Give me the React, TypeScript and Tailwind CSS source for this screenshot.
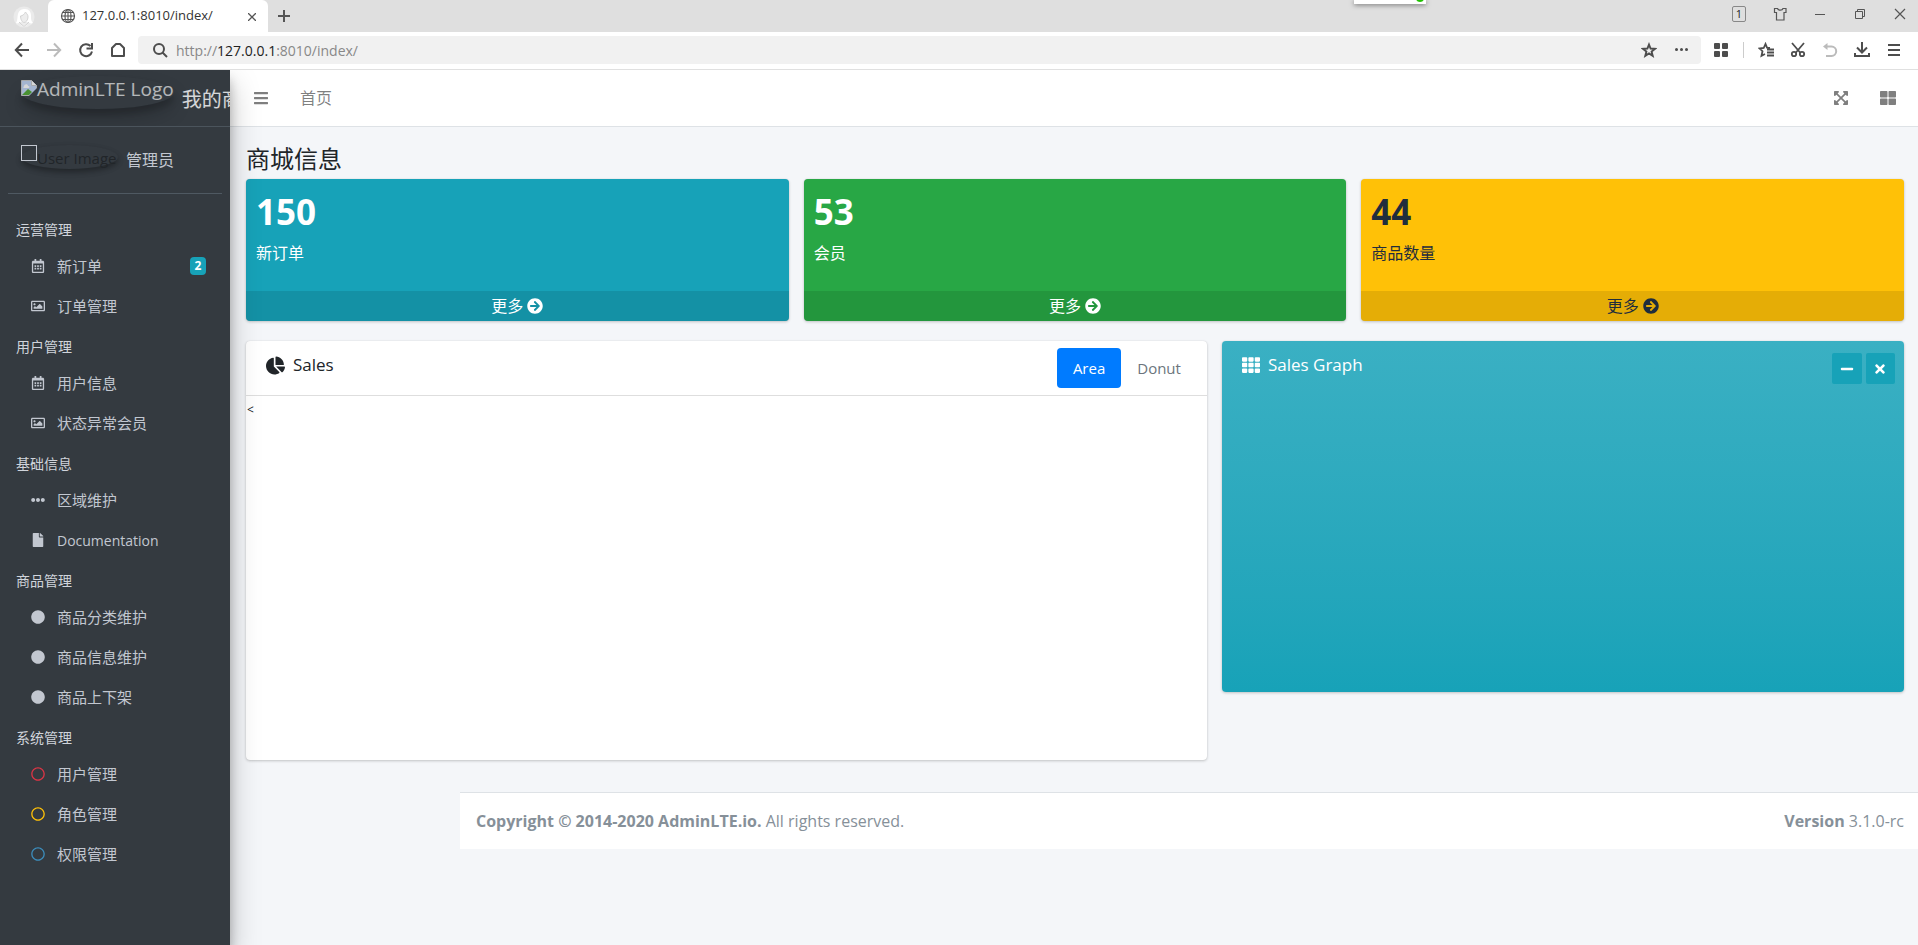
import { type ReactNode } from 'react'
import { clsx } from 'clsx'
import {
  FaArrowCircleRight,
  FaBars,
  FaChartPie,
  FaCircle,
  FaEllipsisH,
  FaExpandArrowsAlt,
  FaFile,
  FaMinus,
  FaRegCalendarAlt,
  FaRegCircle,
  FaRegImage,
  FaTh,
  FaThLarge,
  FaTimes,
} from 'react-icons/fa'

type NavItem = { label: string; icon: ReactNode; badge?: string; latin?: boolean }

const navGroups: { title: string; items: NavItem[] }[] = [
  {
    title: '运营管理',
    items: [
      { label: '新订单', icon: <FaRegCalendarAlt />, badge: '2' },
      { label: '订单管理', icon: <FaRegImage /> },
    ],
  },
  {
    title: '用户管理',
    items: [
      { label: '用户信息', icon: <FaRegCalendarAlt /> },
      { label: '状态异常会员', icon: <FaRegImage /> },
    ],
  },
  {
    title: '基础信息',
    items: [
      { label: '区域维护', icon: <FaEllipsisH /> },
      { label: 'Documentation', icon: <FaFile />, latin: true },
    ],
  },
  {
    title: '商品管理',
    items: [
      { label: '商品分类维护', icon: <FaCircle /> },
      { label: '商品信息维护', icon: <FaCircle /> },
      { label: '商品上下架', icon: <FaCircle /> },
    ],
  },
  {
    title: '系统管理',
    items: [
      { label: '用户管理', icon: <FaRegCircle className="text-[#dc3545]" /> },
      { label: '角色管理', icon: <FaRegCircle className="text-[#ffc107]" /> },
      { label: '权限管理', icon: <FaRegCircle className="text-[#3c8dbc]" /> },
    ],
  },
]

const stats = [
  { value: '150', label: '新订单', color: 'bg-[#17a2b8] text-white' },
  { value: '53', label: '会员', color: 'bg-[#28a745] text-white' },
  { value: '44', label: '商品数量', color: 'bg-[#ffc107] text-[#1f2d3d]' },
]

function Glyph({ children, className }: { children: ReactNode; className?: string }) {
  return (
    <svg
      viewBox="0 0 16 16"
      className={clsx('size-4 shrink-0', className)}
      fill="none"
      stroke="currentColor"
      strokeWidth="2"
      aria-hidden="true"
    >
      {children}
    </svg>
  )
}

function TabStrip() {
  return (
    <div className="relative flex h-8 items-center bg-[#dfdfdf] text-[#555]">
      <button className="flex w-12 justify-center pt-0.5" aria-label="Account">
        <svg viewBox="0 0 22 22" className="size-[22px]" fill="none" aria-hidden="true">
          <circle cx="11" cy="11" r="10.5" fill="#ebebeb" />
          <path
            d="M3 17c2-3 1-6 2-9 1-4 4-5 7-5 4 0 6 3 6 7 0 3 0 5 2 7-2 1-4 0-5-1l-1 3-3 2-3-2-1-3c-1 1-3 2-4 1z"
            fill="#fff"
          />
          <path
            d="M7.500 10c2 0 4-2 5-4 1 2 2.500 2 2.500 5 0 3-2 5.500-4 5.500S7.500 13 7.500 10zM6 16l2 2 3 2.500 3-2.500 2-2"
            stroke="#d4d4d4"
            fill="#ededed"
          />
        </svg>
      </button>
      <div className="flex h-8 w-[220px] items-center rounded-t-md bg-white px-3">
        <Glyph className="text-[#555]">
          <circle cx="8" cy="8" r="6.500" strokeWidth="1.200" />
          <ellipse cx="8" cy="8" rx="3" ry="6.500" strokeWidth="1.200" />
          <path d="M1.500 8h13M8 1.500v13M2.500 4.500h11M2.500 11.500h11" strokeWidth="1.100" />
        </Glyph>
        <span className="ml-1.5 flex-1 text-[13px] text-[#333]">127.0.0.1:8010/index/</span>
        <button aria-label="Close tab" className="pt-px">
          <svg viewBox="0 0 8 8" className="size-2" stroke="currentColor" strokeWidth="1.300">
            <path d="M0 0l8 8M8 0l-8 8" />
          </svg>
        </button>
      </div>
      <button className="ml-2" aria-label="New tab">
        <Glyph>
          <path d="M8 2v12M2 8h12" />
        </Glyph>
      </button>
      <div className="absolute top-0 right-[492px] h-1 w-[72px] bg-white shadow-[0_1px_5px_rgba(0,0,0,0.5)]">
        <div className="relative h-1 overflow-hidden">
          <span className="absolute right-[2px] bottom-[2px] size-2 rounded-full bg-[#1fc200]" />
        </div>
      </div>
      <div className="ml-auto flex items-center gap-6 pr-2.5 pb-1">
        <button className="mr-0.5 flex h-4 w-3.5 items-center justify-center rounded-xs border border-[#888] text-[11px] text-[#222]">
          1
        </button>
        <button aria-label="Skin">
          <Glyph>
            <path
              d="M5.500 2.500H2.500v4H4.500v7.500h7.500V6.500h2v-4h-3c-.5 2.200-5 2.200-5.500 0z"
              strokeWidth="1.200"
            />
          </Glyph>
        </button>
        <button aria-label="Minimize">
          <Glyph>
            <path d="M3 8.500h10" strokeWidth="1" />
          </Glyph>
        </button>
        <button aria-label="Restore">
          <Glyph>
            <path d="M3.500 5.500h7v7h-7zM5.500 5.500v-2h7v7h-2" strokeWidth="1" />
          </Glyph>
        </button>
        <button aria-label="Close window">
          <Glyph>
            <path d="M3 3l10 10M13 3L3 13" strokeWidth="1.200" />
          </Glyph>
        </button>
      </div>
    </div>
  )
}

function AddressRow() {
  return (
    <div className="flex h-[38px] items-center border-b border-[#e0e0e0] bg-white pr-4 pb-px pl-3.5 text-[#4d4d4d]">
      <div className="flex gap-4">
        <button aria-label="Back">
          <Glyph>
            <path d="M15 8H2M8 1.500L1.800 8 8 14.500" />
          </Glyph>
        </button>
        <button aria-label="Forward" className="text-[#bbb]">
          <Glyph>
            <path d="M1 8h13M8 1.500L14.200 8 8 14.500" />
          </Glyph>
        </button>
        <button aria-label="Reload">
          <Glyph>
            <path d="M14 9.500A6 6 0 1 1 12.500 4M14 1v5.500H8.500" />
          </Glyph>
        </button>
        <button aria-label="Home">
          <Glyph>
            <path d="M2 14V6L6 2h4l4 4v8z" strokeLinejoin="round" />
          </Glyph>
        </button>
      </div>
      <div className="mr-3 ml-3 flex h-7 flex-1 items-center rounded-sm bg-[#f1f1f1] pr-3 pl-3.5">
        <Glyph className="mr-2">
          <circle cx="7" cy="7" r="5" />
          <path d="M10.500 10.500l4.500 4.500" />
        </Glyph>
        <a href="#url" className="flex-1 text-[14px] text-[#888]">
          http://<span className="text-[#222]">127.0.0.1</span>:8010/index/
        </a>
        <button aria-label="Bookmark">
          <Glyph>
            <path
              d="M8 2.500l1.600 4 4.400.3-3.400 2.800 1.100 4.200L8 11.400l-3.700 2.400 1.100-4.200L2 6.800l4.400-.3z"
              strokeWidth="1.900"
            />
          </Glyph>
        </button>
        <button className="ml-4" aria-label="More">
          <Glyph>
            <path d="M3.500 7.500h.01M8.500 7.500h.01M13.500 7.500h.01" strokeWidth="3" strokeLinecap="round" />
          </Glyph>
        </button>
      </div>
      <button aria-label="Apps">
        <Glyph>
          <g fill="currentColor" stroke="none">
            <rect x="1" y="1" width="6" height="6" rx="1" />
            <rect x="9" y="1" width="6" height="6" rx="1" />
            <rect x="1" y="9" width="6" height="6" rx="1" />
            <rect x="9" y="9" width="6" height="6" rx="1" />
          </g>
        </Glyph>
      </button>
      <span className="mx-3.5 h-4 w-px bg-[#ccc]" />
      <div className="flex gap-4">
        <button aria-label="Favorites">
          <Glyph>
            <path d="M12 6l-3-.3L7.500 2 5.700 6 1.500 6.500l3 2.700-1 4.600L7 12M9 7.500h7M9 10.500h7M9 13.500h7" strokeWidth="1.800" />
          </Glyph>
        </button>
        <button aria-label="Screenshot">
          <Glyph>
            <path d="M2 1l8.500 10M14 1L5.500 11" strokeWidth="1.800" />
            <circle cx="4" cy="12" r="2.200" strokeWidth="1.800" />
            <circle cx="12" cy="12" r="2.200" strokeWidth="1.800" />
          </Glyph>
        </button>
        <button aria-label="Undo" className="text-[#bbb]">
          <Glyph>
            <path d="M3 4.500h6.500a4.700 4.700 0 0 1 0 9.400H4" />
            <path d="M5.500 1v7L1 4.500z" fill="currentColor" stroke="none" />
          </Glyph>
        </button>
        <button aria-label="Downloads">
          <Glyph>
            <path d="M8 0v10M3 5.500l5 5 5-5M1 11v3h14v-3" />
          </Glyph>
        </button>
        <button aria-label="Menu">
          <Glyph>
            <path d="M2 3h12M2 8h12M2 13h12" />
          </Glyph>
        </button>
      </div>
    </div>
  )
}

function Sidebar() {
  return (
    <aside className="relative z-10 w-[230px] shrink-0 bg-[#343a40] text-[#c2c7d0] shadow-[0_14px_28px_rgba(0,0,0,0.25),0_10px_10px_rgba(0,0,0,0.22)]">
      <a
        href="#home"
        className="flex h-[57px] items-start gap-2 overflow-hidden border-b border-[#4b545c] pt-1.5 pl-[21px] text-xl whitespace-nowrap text-white/80"
      >
        <span className="flex h-[33px] shrink-0 items-start rounded-[50%] text-[19px] leading-[26px] opacity-80 shadow-[0_10px_20px_rgba(0,0,0,0.19),0_6px_6px_rgba(0,0,0,0.23)]">
          <svg viewBox="0 0 16 16" className="mt-1 size-4" aria-hidden="true">
            <path d="M.5.500h10l5 5v10H.5z" fill="#c1d4f5" stroke="#c6c6c6" />
            <path d="M3 6.500c0-3 4-3 4-.5 2 0 2 2 0 2H3c-1 0-1-1.500 0-1.500z" fill="#fff" />
            <path d="M1 15l6-6 4 3-3 3z" fill="#4ea62e" />
            <path d="M16 8L8 16h8z" fill="#343a40" />
            <path d="M10.500.500v5h5" fill="#fff" stroke="#c6c6c6" />
          </svg>
          AdminLTE Logo
        </span>
        <span className="pt-2 leading-8">我的商城</span>
      </a>
      <div className="mx-2 flex h-[67px] items-start border-b border-[#4f5962] pt-[18px] pl-[13px]">
        <span className="flex h-6 w-[97px] items-start rounded-[50%] text-[#212529] shadow-[0_3px_6px_rgba(0,0,0,0.16),0_3px_6px_rgba(0,0,0,0.23)]">
          <span className="size-4 shrink-0 border border-[#c2c7d0]" />
          <span className="text-[15px] leading-[26px] whitespace-nowrap">User Image</span>
        </span>
        <a href="#user" className="ml-2 leading-[30px]">
          管理员
        </a>
      </div>
      <nav className="px-2 pt-[17px]">
        {navGroups.map((group) => (
          <section key={group.title}>
            <h2 className="flex h-[37px] items-center pl-2 text-[14px] text-[#d0d4db]">{group.title}</h2>
            {group.items.map((item) => (
              <a
                key={item.label}
                href="#nav"
                className={clsx('mb-1 flex h-9 items-center pr-4 pl-5', item.latin ? 'text-[14px]' : 'text-[15px]')}
              >
                <span className="flex w-[19px] justify-center text-sm">{item.icon}</span>
                <span className="ml-2.5">{item.label}</span>
                {item.badge && (
                  <span className="ml-auto flex h-[18px] w-4 items-center justify-center rounded-sm bg-[#17a2b8] text-xs font-bold text-white">
                    {item.badge}
                  </span>
                )}
              </a>
            ))}
          </section>
        ))}
      </nav>
    </aside>
  )
}

function Navbar() {
  return (
    <header className="flex h-[57px] items-center border-b border-[#dee2e6] bg-white pr-[22px] pl-[23px] text-black/50">
      <button aria-label="Toggle sidebar">
        <FaBars />
      </button>
      <a href="#home" className="ml-[31px]">
        首页
      </a>
      <button className="mr-[31px] ml-auto" aria-label="Fullscreen">
        <FaExpandArrowsAlt />
      </button>
      <button aria-label="Control sidebar">
        <FaThLarge />
      </button>
    </header>
  )
}

const cardShadow = 'shadow-[0_0_1px_rgba(0,0,0,0.13),0_1px_3px_rgba(0,0,0,0.2)]'

export default function App() {
  return (
    <div className="flex min-h-screen flex-col bg-[#f4f6f9] font-['Open_Sans','Noto_Sans_CJK_SC',sans-serif] text-base text-[#212529]">
      <TabStrip />
      <AddressRow />
      <div className="flex flex-1 overflow-hidden">
        <Sidebar />
        <div className="min-w-0 flex-1">
          <Navbar />
          <main className="pr-3.5 pl-4">
            <h1 className="pt-[22px] pb-2.5 text-2xl leading-5">商城信息</h1>
            <div className="grid grid-cols-3 gap-[15px]">
              {stats.map((stat) => (
                <section key={stat.label} className={clsx('overflow-hidden rounded-sm', cardShadow, stat.color)}>
                  <div className="h-28 px-2.5 pt-3">
                    <h3 className="text-[35px] leading-[42px] font-bold">{stat.value}</h3>
                    <p className="mt-2 leading-6">{stat.label}</p>
                  </div>
                  <a href="#more" className="flex h-[30px] items-center justify-center gap-1 bg-black/10">
                    更多 <FaArrowCircleRight />
                  </a>
                </section>
              ))}
            </div>
            <div className="mt-5 grid grid-cols-12 items-start gap-[15px]">
              <section className={clsx('col-span-7 rounded-sm bg-white', cardShadow)}>
                <div className="flex h-[55px] items-start justify-between border-b border-black/13 pr-2.5 pl-5">
                  <h3 className="flex items-center gap-2 pt-3 text-[17px] leading-6">
                    <FaChartPie className="size-[19px]" />
                    Sales
                  </h3>
                  <div className="flex pt-[7px] text-[15px]">
                    <button className="h-10 rounded-sm bg-[#007bff] px-4 text-white">Area</button>
                    <button className="h-10 px-4 text-[#6c757d]">Donut</button>
                  </div>
                </div>
                <div className="h-[364px] px-px pt-1 text-xs leading-5">&lt;</div>
              </section>
              <section
                className={clsx(
                  'col-span-5 flex h-[351px] items-start justify-between rounded-sm bg-linear-to-b from-[#3ab0c3] to-[#17a2b8] pr-[9px] pl-5 text-white',
                  cardShadow,
                )}
              >
                <h3 className="flex items-center gap-2 pt-3 text-[17px] leading-6">
                  <FaTh className="size-[18px]" />
                  Sales Graph
                </h3>
                <div className="flex gap-1 pt-3 text-sm">
                  <button
                    className="flex h-[31px] w-[30px] items-center justify-center rounded-xs bg-[#17a2b8]"
                    aria-label="Collapse"
                  >
                    <FaMinus />
                  </button>
                  <button
                    className="flex h-[31px] w-[29px] items-center justify-center rounded-xs bg-[#17a2b8]"
                    aria-label="Remove"
                  >
                    <FaTimes />
                  </button>
                </div>
              </section>
            </div>
          </main>
          <footer className="mt-8 ml-[230px] flex justify-between border-t border-[#dee2e6] bg-white py-4 pr-3.5 pl-4 text-[#869099]">
            <p>
              <strong>Copyright © 2014-2020 AdminLTE.io.</strong> All rights reserved.
            </p>
            <p>
              <b>Version</b> 3.1.0-rc
            </p>
          </footer>
        </div>
      </div>
    </div>
  )
}
